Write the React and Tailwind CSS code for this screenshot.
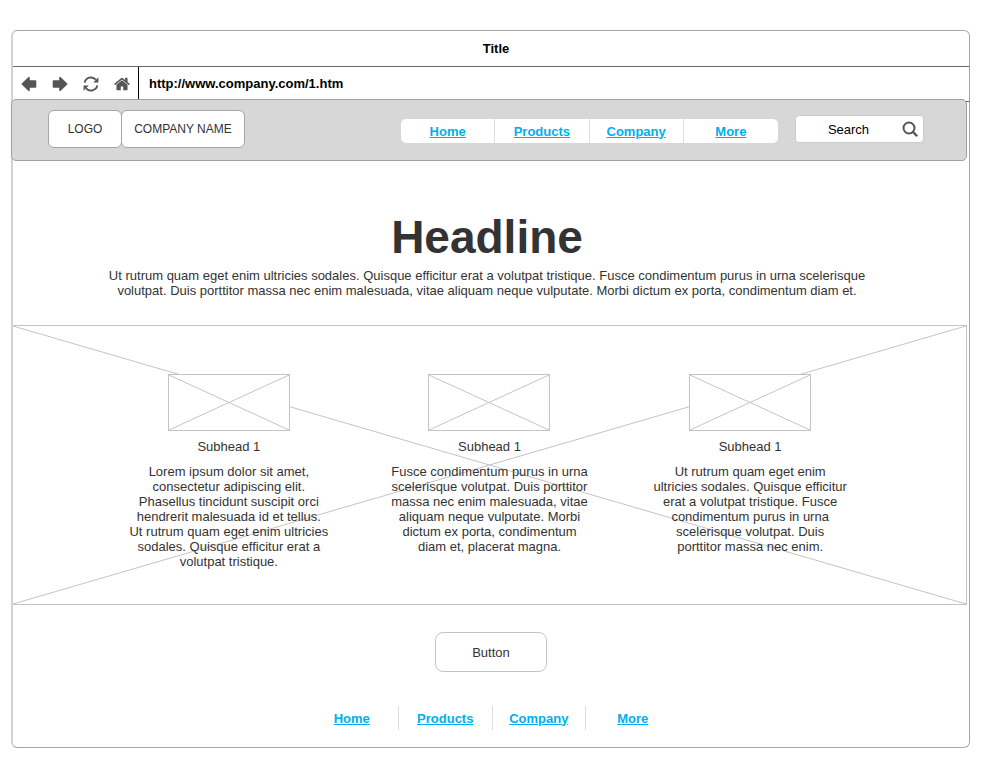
const NAV_LINKS = ['Home', 'Products', 'Company', 'More'];

const FEATURES = [
  {
    id: 1,
    title: 'Subhead 1',
    text: `Lorem ipsum dolor sit amet,
consectetur adipiscing elit.
Phasellus tincidunt suscipit orci
hendrerit malesuada id et tellus.
Ut rutrum quam eget enim ultricies
sodales. Quisque efficitur erat a
volutpat tristique.`,
  },
  {
    id: 2,
    title: 'Subhead 1',
    text: `Fusce condimentum purus in urna
scelerisque volutpat. Duis porttitor
massa nec enim malesuada, vitae
aliquam neque vulputate. Morbi
dictum ex porta, condimentum
diam et, placerat magna.`,
  },
  {
    id: 3,
    title: 'Subhead 1',
    text: `Ut rutrum quam eget enim
ultricies sodales. Quisque efficitur
erat a volutpat tristique. Fusce
condimentum purus in urna
scelerisque volutpat. Duis
porttitor massa nec enim.`,
  },
];

/* icons */
function ArrowIcon({ className = '' }) {
  return (
    <svg viewBox="0 0 16 16" className={`size-4 ${className}`} aria-hidden="true">
      <path
        d="M8 1.700 1.300 8 8 14.300V10.900H14.500V5.100H8Z"
        fill="currentColor"
        stroke="currentColor"
        strokeWidth="1.600"
        strokeLinejoin="round"
      />
    </svg>
  );
}

function RefreshIcon() {
  return (
    <svg viewBox="0 0 16 16" className="size-4" aria-hidden="true">
      <g fill="none" stroke="currentColor" strokeWidth="1.900">
        <path d="M1.700 6.600A6.400 6.400 0 0 1 12.800 3.700" />
        <path d="M14.300 9.400A6.400 6.400 0 0 1 3.200 12.300" />
      </g>
      <path fill="currentColor" d="M15.400 1.200v5.200h-5.200ZM.6 14.800V9.600h5.200Z" />
    </svg>
  );
}

function HomeIcon() {
  return (
    <svg viewBox="0 0 1664 1344" className="w-4 h-[14px]" aria-hidden="true">
      <path
        fill="currentColor"
        d="M1408 768v480q0 26-19 45t-45 19H960V928H704v384H320q-26 0-45-19t-19-45V768q0-1 .5-3t.5-3l575-474 575 474q1 2 1 6zm223-69l-62 74q-8 9-21 11h-3q-13 0-21-7L832 200 140 777q-12 8-24 7-13-2-21-11l-62-74q-8-10-7-23.500T37 654L756 55q32-26 76-26t76 26l244 204V64q0-14 9-23t23-9h192q14 0 23 9t9 23v408l219 182q10 8 11 21.500t-7 23.500z"
      />
    </svg>
  );
}

function SearchIcon() {
  return (
    <svg viewBox="0 0 16 16" className="size-4" fill="none" stroke="currentColor" aria-hidden="true">
      <circle cx="7" cy="7" r="5.500" strokeWidth="2" />
      <path d="m11 11 3.500 3.500" strokeWidth="2.400" strokeLinecap="round" />
    </svg>
  );
}

/* crossed diagonals of an image placeholder */
function Cross({ className = '' }) {
  return (
    <svg className={`size-full ${className}`} stroke="#c4c4c4" aria-hidden="true">
      <line x1="0" y1="0" x2="100%" y2="100%" />
      <line x1="0" y1="100%" x2="100%" y2="0" />
    </svg>
  );
}

function NavLinks({ label, className }) {
  return (
    <nav aria-label={label} className={`grid grid-cols-4 h-6 ${className}`}>
      {NAV_LINKS.map((link) => (
        <div
          key={link}
          className="flex items-center justify-center border-r border-[#dedede] last:border-r-0"
        >
          <a href="#" className="font-bold text-[#00aeef] underline">
            {link}
          </a>
        </div>
      ))}
    </nav>
  );
}

function Feature({ title, text }) {
  return (
    <article className="flex flex-col items-center text-center">
      <div className="w-[122px] h-[57px] bg-white border border-[#c4c4c4]">
        <Cross />
      </div>
      <h2 className="mt-2">{title}</h2>
      <p className="mt-[10px] whitespace-pre-line">{text}</p>
    </article>
  );
}

export default function App() {
  return (
    <div className="bg-white pt-[30px] pb-[11px] pl-[11px] pr-[30px] font-['Liberation_Sans',Arial,sans-serif] text-[13px] leading-[15px] text-[#333333]">
      <div className="border border-[#a6a6a6] border-l-2 border-l-[#d2d2d2] rounded-md">
        {/* Browser chrome */}
        <div className="flex items-center justify-center h-9 pl-[10px] border-b border-[#666666] font-bold text-black">
          Title
        </div>
        <div className="flex h-[35px] border-b border-[#666666]">
          <div className="flex items-center gap-[15px] pl-2 pr-2 border-r border-black text-[#555555]">
            <button type="button" aria-label="Back">
              <ArrowIcon />
            </button>
            <button type="button" aria-label="Forward">
              <ArrowIcon className="rotate-180" />
            </button>
            <button type="button" aria-label="Reload">
              <RefreshIcon />
            </button>
            <button type="button" aria-label="Home page">
              <HomeIcon />
            </button>
          </div>
          <input
            type="text"
            aria-label="Address"
            defaultValue="http://www.company.com/1.htm"
            className="flex-1 min-w-0 px-[10px] pb-[2px] font-bold text-black outline-none"
          />
        </div>

        {/* Site header */}
        <header className="relative flex items-center h-[62px] -mt-[3px] -ml-[2px] mr-[2px] pb-[2px] pl-9 pr-[42px] bg-[#d7d7d7] border border-[#a0a0a0] rounded-[5px]">
          <div className="flex text-xs">
            <div className="flex items-center justify-center w-[74px] h-[38px] bg-white border border-[#a6a6a6] rounded-md">
              LOGO
            </div>
            <div className="flex items-center justify-center w-[124px] h-[38px] -ml-px bg-white border border-[#a6a6a6] rounded-md">
              COMPANY NAME
            </div>
          </div>
          <div className="flex items-end gap-[17px] ml-auto">
            <NavLinks label="Main" className="w-[377px] bg-white rounded-[5px]" />
            <form className="flex items-center w-[129px] h-7 pr-[5px] bg-white border border-[#cccccc] rounded-sm">
              <input
                type="search"
                aria-label="Search"
                placeholder="Search"
                className="flex-1 min-w-0 pl-3 text-center text-black placeholder:text-black outline-none"
              />
              <button type="button" aria-label="Submit search" className="text-[#555555]">
                <SearchIcon />
              </button>
            </form>
          </div>
        </header>

        <main>
          {/* Hero */}
          <section className="pt-12 pb-[27px] pr-2 text-center">
            <h1 className="text-[46px] leading-[56px] font-bold">Headline</h1>
            <p className="mt-[3px] mx-auto max-w-[760px]">
              Ut rutrum quam eget enim ultricies sodales. Quisque efficitur erat a volutpat
              tristique. Fusce condimentum purus in urna scelerisque volutpat. Duis porttitor
              massa nec enim malesuada, vitae aliquam neque vulputate. Morbi dictum ex porta,
              condimentum diam et.
            </p>
          </section>

          {/* Features over the large image placeholder */}
          <section className="relative h-[280px] mr-[2px] pt-12 border border-l-0 border-[#c4c4c4]">
            <Cross className="absolute inset-0" />
            <div className="relative grid grid-cols-3 mx-auto max-w-[782px]">
              {FEATURES.map((feature) => (
                <Feature key={feature.id} title={feature.title} text={feature.text} />
              ))}
            </div>
          </section>

          <div className="flex justify-center pt-[27px]">
            <button
              type="button"
              className="w-28 h-10 bg-white border border-[#c4c4c4] rounded-lg"
            >
              Button
            </button>
          </div>
        </main>

        <footer className="flex justify-center pt-[34px] pb-[17px] pl-[3px]">
          <NavLinks label="Footer" className="w-[374px]" />
        </footer>
      </div>
    </div>
  );
}
